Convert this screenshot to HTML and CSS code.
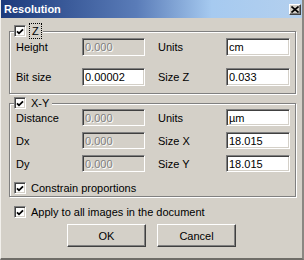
FILE: index.html
```html
<!DOCTYPE html>
<html lang="en">
<head>
    <meta charset="UTF-8">
    <title>Resolution</title>
    <link rel="stylesheet" href="styles.css">
</head>
<body>

    <div class="window">
        <!-- Title bar -->
        <div class="titlebar">
            <span class="title">Resolution</span>
            <span class="close">
                <svg width="8" height="7" viewBox="0 0 8 7"><path d="M0.5 0.5 L7.5 6.5 M7.5 0.5 L0.5 6.5" stroke="#000" stroke-width="1.6"/></svg>
            </span>
        </div>

        <!-- Z group -->
        <fieldset class="group group-z">
            <legend>
                <span class="check"><svg width="8" height="7" viewBox="0 0 8 7"><polyline points="1,3.3 3,5.3 7,1.3" fill="none" stroke="#000" stroke-width="1.8"/></svg></span>
                <span class="focus">Z</span>
            </legend>
            <div class="fields">
                <label>Height</label>
                <input type="text" value="0.000" disabled>
                <label class="right">Units</label>
                <input type="text" value="cm">
                <label>Bit size</label>
                <input type="text" value="0.00002">
                <label class="right">Size Z</label>
                <input type="text" value="0.033">
            </div>
        </fieldset>

        <!-- X-Y group -->
        <fieldset class="group group-xy">
            <legend>
                <span class="check"><svg width="8" height="7" viewBox="0 0 8 7"><polyline points="1,3.3 3,5.3 7,1.3" fill="none" stroke="#000" stroke-width="1.8"/></svg></span>
                <span>X-Y</span>
            </legend>
            <div class="fields">
                <label>Distance</label>
                <input type="text" value="0.000" disabled>
                <label class="right">Units</label>
                <input type="text" value="µm">
                <label>Dx</label>
                <input type="text" value="0.000" disabled>
                <label class="right">Size X</label>
                <input type="text" value="18.015">
                <label>Dy</label>
                <input type="text" value="0.000" disabled>
                <label class="right">Size Y</label>
                <input type="text" value="18.015">
            </div>
            <div class="checkrow constrain">
                <span class="check"><svg width="8" height="7" viewBox="0 0 8 7"><polyline points="1,3.3 3,5.3 7,1.3" fill="none" stroke="#000" stroke-width="1.8"/></svg></span>
                <span>Constrain proportions</span>
            </div>
        </fieldset>

        <div class="checkrow apply">
            <span class="check"><svg width="8" height="7" viewBox="0 0 8 7"><polyline points="1,3.3 3,5.3 7,1.3" fill="none" stroke="#000" stroke-width="1.8"/></svg></span>
            <span>Apply to all images in the document</span>
        </div>

        <!-- Buttons -->
        <div class="buttons">
            <button class="btn">OK</button>
            <button class="btn">Cancel</button>
        </div>
    </div>

</body>
</html>
```

FILE: styles.css
```css
body {
    margin: 0;
    background: #d4d0c8;
    font-family: "Liberation Sans", Arial, sans-serif;
    font-size: 11px;
    color: #000;
}

.window {
    width: 304px;
    height: 260px;
    box-sizing: border-box;
    background: #d4d0c8;
    border-left: 1px solid #f2f0ec;
    border-right: 2px solid #8a8782;
    border-bottom: 2px solid #6f6d68;
}

.titlebar {
    height: 18px;
    display: flex;
    align-items: center;
    justify-content: space-between;
    padding: 0 1px 0 3px;
    background: linear-gradient(90deg, #1c3a7c, #5a7cb8 45%, #a6caf0 70%, #b4d0ee);
}
.title {
    color: #fff;
    font-weight: bold;
    font-size: 11px;
}
.close {
    width: 12px;
    height: 11px;
    box-sizing: border-box;
    display: flex;
    align-items: center;
    justify-content: center;
    background: #d4d0c8;
    border: 1px solid;
    border-color: #fff #404040 #404040 #fff;
    box-shadow: inset -1px -1px #808080;
}

.group {
    margin: 7px 6px 0 8px;
    padding: 0 4px 7px;
    border: 1px solid #808080;
    box-shadow: inset 1px 1px #fff, 1px 1px #fff;
    min-width: 0;
}
.group-xy {
    margin-top: 3px;
    padding-bottom: 2px;
}
legend {
    display: flex;
    align-items: center;
    gap: 5px;
    height: 12px;
    padding: 0 3px 0 0;
    background: #d4d0c8;
}
.focus {
    outline: 1px dotted #000;
    outline-offset: 1px;
    padding: 0 1px;
}

.fields {
    display: grid;
    grid-template-columns: 68px 63px 81px 64px;
    align-items: center;
}
.group-z .fields {
    grid-auto-rows: 18px;
    row-gap: 12px;
    padding-top: 1px;
}
.group-xy .fields {
    grid-auto-rows: 17px;
    row-gap: 6px;
}
label {
    padding-left: 2px;
}
label.right {
    padding-left: 13px;
}

input {
    width: 100%;
    height: 100%;
    box-sizing: border-box;
    margin: 0;
    padding: 0 2px;
    font: inherit;
    color: #000;
    background: #fff;
    border: 1px solid;
    border-color: #808080 #fff #fff #808080;
    box-shadow: inset 1px 1px #404040, inset -1px -1px #d4d0c8;
    outline: none;
}
input:disabled {
    background: #d4d0c8;
    color: #808080;
    text-shadow: 1px 1px #fff;
}

.check {
    width: 12px;
    height: 12px;
    box-sizing: border-box;
    display: flex;
    align-items: center;
    justify-content: center;
    background: #fff;
    border: 1px solid;
    border-color: #808080 #fff #fff #808080;
    box-shadow: inset 1px 1px #404040, inset -1px -1px #d4d0c8;
}

.checkrow {
    display: flex;
    align-items: center;
    gap: 5px;
    height: 12px;
}
.constrain {
    margin-top: 10px;
}
.apply {
    margin: 9px 0 0 13px;
}

.buttons {
    display: flex;
    justify-content: center;
    gap: 11px;
    margin-top: 6px;
}
.btn {
    width: 79px;
    height: 23px;
    box-sizing: border-box;
    padding: 0;
    font: inherit;
    color: #000;
    background: #d4d0c8;
    border: 1px solid;
    border-color: #fff #404040 #404040 #fff;
    box-shadow: inset -1px -1px #808080;
}
```
